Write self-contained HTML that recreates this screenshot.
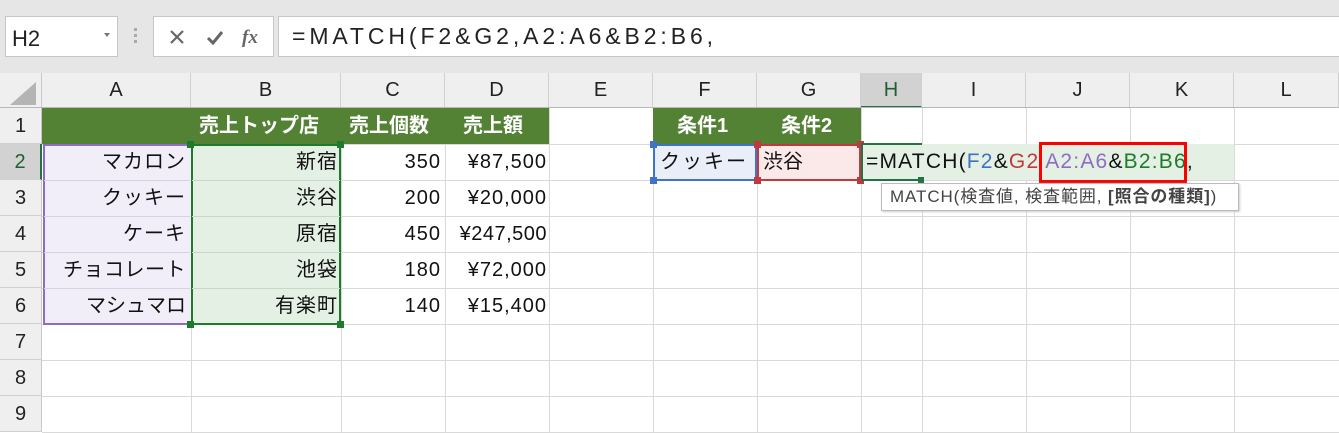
<!DOCTYPE html><html><head><meta charset="utf-8"><style>
*{margin:0;padding:0;box-sizing:border-box}
body{width:1339px;height:433px;overflow:hidden;background:#fff;font-family:"Liberation Sans","Noto Sans CJK JP",sans-serif;position:relative}
.a{position:absolute}
.t{position:absolute;font-size:20px;line-height:36px;white-space:nowrap;color:#111}
.r{position:absolute;font-size:20px;line-height:36px;white-space:nowrap;color:#111;text-align:right;letter-spacing:1px}
.ch{position:absolute;top:73px;height:35px;font-size:20px;line-height:35px;text-align:center;color:#222;border-right:1px solid #d0d0d0;background:#efefef}
.rh{position:absolute;left:0;width:42px;height:36px;font-size:20px;line-height:36px;text-align:center;color:#222;background:#efefef;border-bottom:1px solid #d0d0d0;border-right:1px solid #c8c8c8}
.h{color:#fff;font-weight:bold}
.hd{position:absolute;width:7px;height:7px}
</style></head><body>
<div class="a" style="left:0;top:0;width:1339px;height:73px;background:#e6e6e6"></div>
<div class="a" style="left:5px;top:16px;width:113px;height:41px;background:#fff;border:1px solid #c6c6c6"></div>
<div class="t" style="left:12px;top:21px;line-height:36px;color:#222;font-size:22px">H2</div>
<div class="a" style="left:104px;top:33px;border-left:3px solid transparent;border-right:3px solid transparent;border-top:4px solid #777"></div>
<div class="a" style="left:134px;top:28px;width:3px;height:3px;background:#aaa;box-shadow:0 6px #aaa,0 12px #aaa"></div>
<div class="a" style="left:153px;top:16px;width:121px;height:41px;background:#fff;border:1px solid #c6c6c6"></div>
<svg class="a" style="left:163px;top:26px" width="100" height="22"><path d="M8 5l12 12M20 5L8 17" stroke="#666" stroke-width="2.2"/><path d="M45 12l5 5 9-11" stroke="#666" stroke-width="3" fill="none"/><text x="79" y="17" font-family="Liberation Serif" font-style="italic" font-weight="bold" font-size="19" fill="#666">fx</text></svg>
<div class="a" style="left:278px;top:16px;width:1061px;height:41px;background:#fff;border:1px solid #c6c6c6;border-right:none"></div>
<div class="t" style="left:292px;top:18px;color:#222;font-size:23px;letter-spacing:3.9px">=MATCH(F2&amp;G2,A2:A6&amp;B2:B6,</div>
<div class="a" style="left:0;top:73px;width:42px;height:35px;background:#efefef;border-right:1px solid #c8c8c8"></div>
<div class="a" style="left:10px;top:82px;width:0;height:0;border-left:26px solid transparent;border-bottom:23px solid #b4b4b4"></div>
<div class="ch" style="left:42px;width:149px">A</div>
<div class="ch" style="left:191px;width:150px">B</div>
<div class="ch" style="left:341px;width:104px">C</div>
<div class="ch" style="left:445px;width:104px">D</div>
<div class="ch" style="left:549px;width:104px">E</div>
<div class="ch" style="left:653px;width:104px">F</div>
<div class="ch" style="left:757px;width:104px">G</div>
<div class="ch" style="left:861px;width:61px;background:#d2d2d2;color:#1f5f34;border-bottom:2px solid #217346">H</div>
<div class="ch" style="left:922px;width:104px">I</div>
<div class="ch" style="left:1026px;width:104px">J</div>
<div class="ch" style="left:1130px;width:104px">K</div>
<div class="ch" style="left:1234px;width:105px">L</div>
<div class="a" style="left:0;top:107px;width:1339px;height:1px;background:#b8b8b8"></div>
<svg class="a" style="left:42px;top:108px" width="1297" height="325">
<g stroke="#d9d9d9" stroke-width="1">
<path d="M0 36.5H1297M0 72.5H1297M0 108.5H1297M0 144.5H1297M0 180.5H1297M0 216.5H1297M0 252.5H1297M0 288.5H1297M0 324.5H1297"/>
<path d="M149.5 0V325M299.5 0V325M403.5 0V325M507.5 0V325M611.5 0V325M715.5 0V325M819.5 0V325M880.5 0V325M984.5 0V325M1088.5 0V325M1192.5 0V325"/>
</g></svg>
<div class="rh" style="top:108px">1</div>
<div class="rh" style="top:144px;background:#d2d2d2;color:#1f5f34;border-right:2px solid #217346">2</div>
<div class="rh" style="top:180px">3</div>
<div class="rh" style="top:216px">4</div>
<div class="rh" style="top:252px">5</div>
<div class="rh" style="top:288px">6</div>
<div class="rh" style="top:324px">7</div>
<div class="rh" style="top:360px">8</div>
<div class="rh" style="top:396px">9</div>
<div class="a" style="left:42px;top:108px;width:507px;height:36px;background:#548235"></div>
<div class="a" style="left:653px;top:108px;width:208px;height:36px;background:#548235"></div>
<div class="t h" style="left:199px;top:108px">売上トップ店</div>
<div class="t h" style="left:349px;top:108px">売上個数</div>
<div class="t h" style="left:463px;top:108px">売上額</div>
<div class="t h" style="left:677px;top:108px">条件1</div>
<div class="t h" style="left:781px;top:108px">条件2</div>
<div class="a" style="left:43px;top:144px;width:148px;height:181px;background:#f1eef9;border:2px solid #8e6cc4;border-right:none"></div>
<div class="a" style="left:191px;top:144px;width:150px;height:181px;background:#e3f0e3;border:2px solid #1e7b2c"></div>
<div class="a" style="left:192px;top:180px;width:148px;height:1px;background:#c8d8c8;box-shadow:0 36px #c8d8c8,0 72px #c8d8c8,0 108px #c8d8c8"></div>
<div class="a" style="left:44px;top:180px;width:146px;height:1px;background:#d6d3de;box-shadow:0 36px #d6d3de,0 72px #d6d3de,0 108px #d6d3de"></div>
<div class="hd" style="left:187px;top:141px;background:#1e7b2c"></div><div class="hd" style="left:337px;top:141px;background:#1e7b2c"></div>
<div class="hd" style="left:187px;top:321px;background:#1e7b2c"></div><div class="hd" style="left:337px;top:321px;background:#1e7b2c"></div>
<div class="a" style="left:653px;top:144px;width:104px;height:37px;background:#e9eef9;border:2px solid #3f73c9"></div>
<div class="a" style="left:757px;top:144px;width:104px;height:37px;background:#fbe9ea;border:2px solid #c0393f"></div>
<div class="hd" style="left:650px;top:141px;background:#3f73c9"></div><div class="hd" style="left:650px;top:177px;background:#3f73c9"></div>
<div class="hd" style="left:754px;top:141px;background:#c0393f"></div><div class="hd" style="left:754px;top:177px;background:#c0393f"></div>
<div class="hd" style="left:857px;top:141px;background:#c0393f"></div><div class="hd" style="left:857px;top:177px;background:#c0393f"></div>
<div class="a" style="left:862px;top:144px;width:372px;height:36px;background:#e3f0e3"></div>
<div class="a" style="left:861px;top:144px;width:2px;height:37px;background:#217346"></div>
<div class="a" style="left:861px;top:143px;width:61px;height:2px;background:#217346"></div>
<div class="a" style="left:861px;top:179px;width:61px;height:2px;background:#217346"></div>
<div class="hd" style="left:918px;top:177px;width:6px;height:6px;background:#217346"></div>
<div class="r" style="left:44px;width:142px;top:144px">マカロン</div>
<div class="r" style="left:44px;width:142px;top:180px">クッキー</div>
<div class="r" style="left:44px;width:142px;top:216px">ケーキ</div>
<div class="r" style="left:44px;width:142px;top:252px;letter-spacing:0.5px">チョコレート</div>
<div class="r" style="left:44px;width:142px;top:288px;letter-spacing:0px">マシュマロ</div>
<div class="r" style="left:193px;width:145px;top:144px">新宿</div>
<div class="r" style="left:193px;width:145px;top:180px">渋谷</div>
<div class="r" style="left:193px;width:145px;top:216px">原宿</div>
<div class="r" style="left:193px;width:145px;top:252px">池袋</div>
<div class="r" style="left:193px;width:145px;top:288px">有楽町</div>
<div class="r" style="left:345px;width:96px;top:144px">350</div><div class="r" style="left:345px;width:96px;top:180px">200</div><div class="r" style="left:345px;width:96px;top:216px">450</div><div class="r" style="left:345px;width:96px;top:252px">180</div><div class="r" style="left:345px;width:96px;top:288px">140</div>
<div class="r" style="left:445px;width:102px;top:144px">¥87,500</div><div class="r" style="left:445px;width:102px;top:180px">¥20,000</div><div class="r" style="left:445px;width:102px;top:216px;letter-spacing:0.5px">¥247,500</div><div class="r" style="left:445px;width:102px;top:252px">¥72,000</div><div class="r" style="left:445px;width:102px;top:288px">¥15,400</div>
<div class="t" style="left:660px;top:144px;letter-spacing:2px">クッキー</div>
<div class="t" style="left:763px;top:144px">渋谷</div>
<div class="t" style="left:866px;top:144px;font-size:21px;letter-spacing:1.2px">=MATCH(<span style="color:#3f73c9">F2</span>&amp;<span style="color:#c0393f">G2</span> <span style="color:#8e6cc4">A2:A6</span>&amp;<span style="color:#1e7b2c">B2:B6</span>,</div>
<div class="a" style="left:1039px;top:142px;width:148px;height:41px;border:3px solid #f00"></div>
<div class="a" style="left:881px;top:183px;width:358px;height:28px;background:#fff;border:1px solid #bbb;box-shadow:1px 1px 2px #ccc"></div>
<div class="t" style="left:890px;top:180px;font-size:17px;line-height:34px;color:#444;letter-spacing:0.9px">MATCH(検査値, 検査範囲, <b>[照合の種類]</b>)</div>
</body></html>
